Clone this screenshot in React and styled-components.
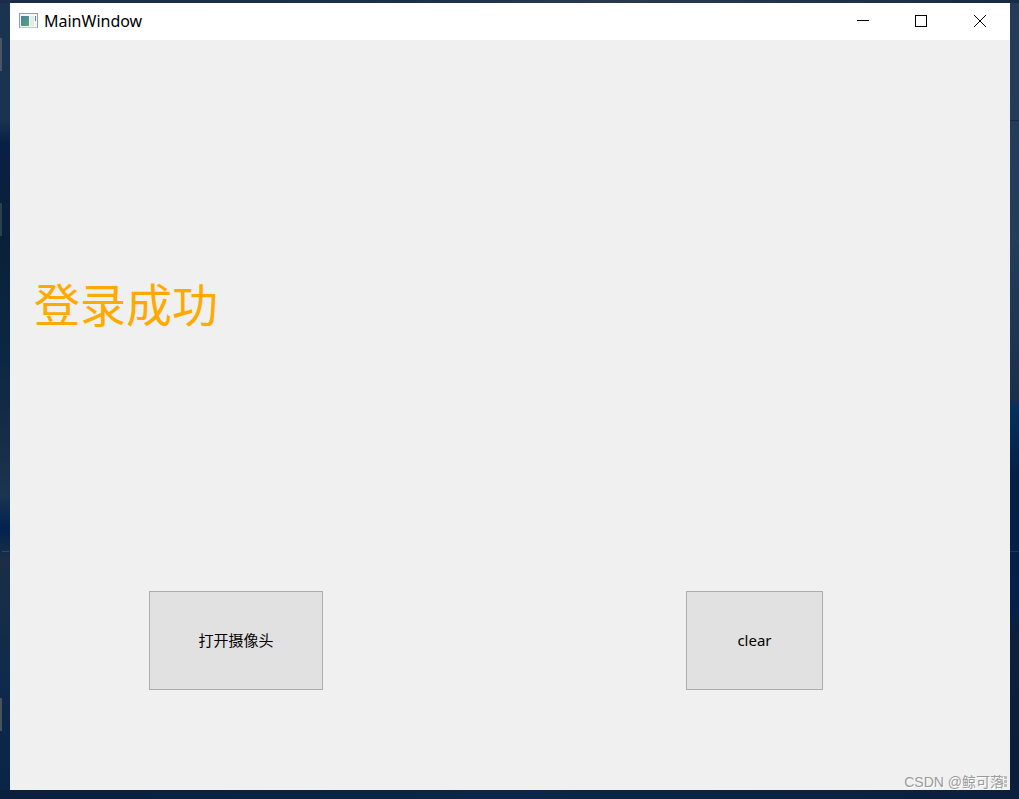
import React from 'react';
import styled, { createGlobalStyle } from 'styled-components'

const GlobalStyle = createGlobalStyle`
  * {
    box-sizing: border-box;
  }
  body {
    margin: 0;
    font-family: "Noto Sans", "Noto Sans CJK SC", sans-serif;
    color: #000;
  }
`

const Desktop = styled.div`
  display: flex;
  min-height: 100vh;
  padding: 3px 9px 9px 10px;
  background:
    linear-gradient(#4a5666, #4a5666) 0 38px / 2px 33px no-repeat,
    linear-gradient(#2c4050, #2c4050) 0 203px / 2px 33px no-repeat,
    linear-gradient(#47525f, #47525f) 0 698px / 2px 33px no-repeat,
    linear-gradient(#1a2c45, #1a2c45) 100% 120px / 9px 1px no-repeat,
    linear-gradient(#34485f, #34485f) 2px 551px / 7px 1px no-repeat,
    linear-gradient(#16385c, #16385c) 100% 551px / 9px 1px no-repeat,
    linear-gradient(90deg, #1b2c48, #1c3049 40%, #2a394e 60%, #182a42) 0 0 / 100% 3px no-repeat,
    linear-gradient(90deg, #091f3d, #0b2648 50%, #0a1f3d) 0 100% / 100% 9px no-repeat,
    linear-gradient(#1a3350 0, #1a3350 15%, #0a1f45 18%, #0b2038 30%, #0c2744 45%, #182c46 55%, #1b3450 62%, #03224f 66%, #1c2e46 70%, #0f2a4b 85%, #0a2347) 0 0 / 10px 100% no-repeat,
    linear-gradient(#243b58 0, #233d5c 30%, #1a2f4c 50%, #02305f 51%, #021f45 60%, #03204a 75%, #0c1f3c 80%, #0a1e3b) 100% 0 / 9px 100% no-repeat,
    #0a2347;
`

const Window = styled.main`
  display: flex;
  flex: 1;
  flex-direction: column;
  background: #f0f0f0;
`

const TitleBar = styled.header`
  display: flex;
  align-items: center;
  height: 37px;
  padding: 0 0 2px 9px;
  background: #fff;
`

const Title = styled.span`
  flex: 1;
  margin-left: 6px;
  font-size: 16px;
  line-height: 20px;
`

const WindowButton = styled.button`
  display: flex;
  align-items: center;
  justify-content: center;
  width: ${props => props.$wide ? '60px' : '58px'};
  height: 35px;
  padding: 0;
  border: 0;
  background: transparent;
  &:hover {
    background: ${props => props.$close ? '#e81123' : '#e5e5e5'};
  }
`

const Content = styled.section`
  display: flex;
  flex: 1;
  flex-direction: column;
  justify-content: space-between;
  padding-top: 232px;
`

const Message = styled.h1`
  margin: 0;
  padding: 0 24px;
  color: #ffaa00;
  font-family: "Noto Sans CJK SC", sans-serif;
  font-size: 46px;
  font-weight: 400;
  line-height: 60px;
`

const Actions = styled.div`
  display: flex;
  justify-content: space-between;
  padding: 0 187px 84px 139px;
`

const PushButton = styled.button`
  width: ${props => props.$wide ? '174px' : '137px'};
  height: 99px;
  padding: 0 0 2px;
  border: 1px solid #adadad;
  background: #e1e1e1;
  color: #000;
  font-family: inherit;
  font-size: 15px;
  line-height: 20px;
  &:hover {
    border-color: #0078d7;
    background: #e5f1fb;
  }
`

const StatusBar = styled.footer`
  display: flex;
  align-items: center;
  justify-content: flex-end;
  height: 16px;
  padding-right: 3px;
`

const Credit = styled.span`
  margin-right: -3px;
  color: #9a9a9a;
  font-family: "Liberation Sans", "Noto Sans CJK SC", sans-serif;
  font-size: 14px;
  line-height: 16px;
  text-shadow: 1px 1px 0 #fff;
`

const AppIcon = () => (
  <svg width="19" height="16" viewBox="0 0 19 16" aria-hidden="true">
    <defs>
      <linearGradient id="pane" x1="0" y1="0" x2="1" y2="1">
        <stop offset="0" stopColor="#4a7fa5" />
        <stop offset="1" stopColor="#55a878" />
      </linearGradient>
    </defs>
    <rect x="0.5" y="0.5" width="18" height="14" fill="#f4f6f7" stroke="#939da5" />
    <rect x="1" y="14" width="17" height="1" fill="#c4c8ca" />
    <rect x="2" y="3" width="8" height="10" fill="url(#pane)" />
    <rect x="11" y="3" width="4" height="10" fill="#e5eaed" />
    <rect x="16" y="3" width="1" height="5" fill="#4f8d96" />
  </svg>
)

const SizeGrip = () => (
  <svg width="6" height="12" viewBox="0 0 6 12" aria-hidden="true">
    <path d="M0 0h2v2H0zM3 0h3v3H3zM0 4h2v3H0zM3 4h3v3H3zM0 8h2v3H0zM3 8h3v3H3z" fill="#bdbdbd" />
  </svg>
)

const App = () => (
  <>
    <GlobalStyle />
    <Desktop>
      <Window>
        <TitleBar>
          <AppIcon />
          <Title>MainWindow</Title>
          <WindowButton aria-label="Minimize">
            <svg width="12" height="12" viewBox="0 0 12 12"><path d="M0 5.5h12" stroke="#000" /></svg>
          </WindowButton>
          <WindowButton aria-label="Maximize">
            <svg width="12" height="12" viewBox="0 0 12 12"><rect x="0.5" y="0.5" width="11" height="11" fill="none" stroke="#000" /></svg>
          </WindowButton>
          <WindowButton $wide $close aria-label="Close">
            <svg width="12" height="12" viewBox="0 0 12 12"><path d="M0 0l12 12M12 0L0 12" stroke="#000" /></svg>
          </WindowButton>
        </TitleBar>
        <Content>
          <Message>登录成功</Message>
          <Actions>
            <PushButton $wide>打开摄像头</PushButton>
            <PushButton>clear</PushButton>
          </Actions>
        </Content>
        <StatusBar>
          <Credit>CSDN @鲸可落</Credit>
          <SizeGrip />
        </StatusBar>
      </Window>
    </Desktop>
  </>
);

export default App;
